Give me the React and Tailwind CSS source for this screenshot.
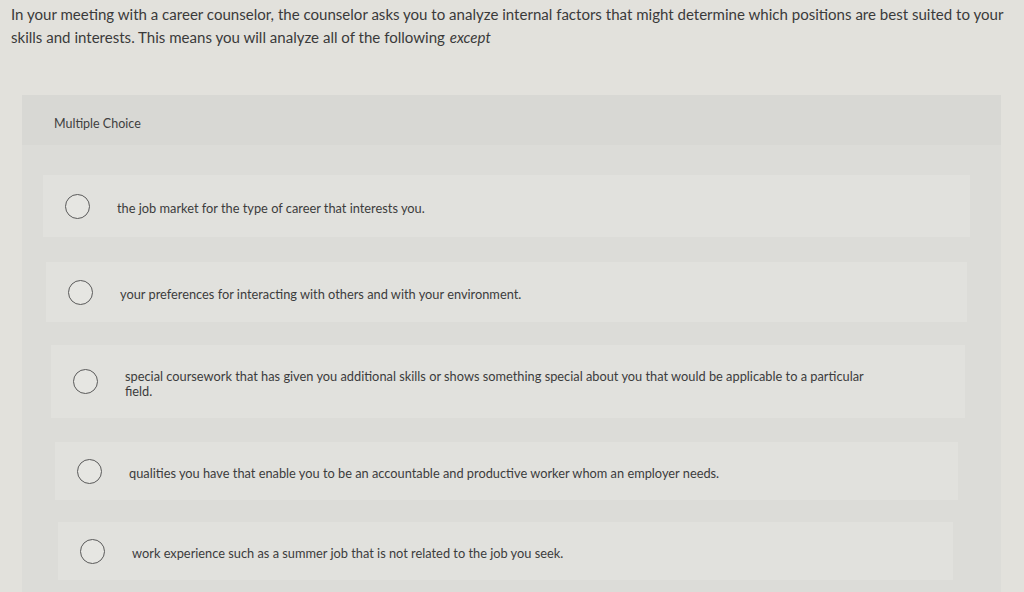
import React from 'react';

const options = [
  { id: 'a', box: 'ml-[21px] w-[927px] h-[62px] mt-[30px]', text: 'the job market for the type of career that interests you.' },
  { id: 'b', box: 'ml-[24px] w-[921px] h-[60px] mt-[25px]', text: 'your preferences for interacting with others and with your environment.' },
  { id: 'c', box: 'ml-[29px] w-[914px] h-[73px] mt-[23px]', text: 'special coursework that has given you additional skills or shows something special about you that would be applicable to a particular field.' },
  { id: 'd', box: 'ml-[33px] w-[903px] h-[58px] mt-[24px]', text: 'qualities you have that enable you to be an accountable and productive worker whom an employer needs.' },
  { id: 'e', box: 'ml-[36px] w-[895px] h-[58px] mt-[22px]', text: 'work experience such as a summer job that is not related to the job you seek.' },
];

const Radio = () => (
  <span className="shrink-0 w-[25px] h-[25px] rounded-full border border-[#5a5a5a] bg-[#e6e6e2]"></span>
);

export default function App() {
  return (
    <div
      className="w-[1024px] h-[592px] overflow-hidden bg-[#e2e1dc] text-[#3a3a3a]"
      style={{ fontFamily: 'Lato, "Open Sans", sans-serif' }}
    >
      {/* Question */}
      <div className="px-[11px] pt-[3px] text-[15.05px] leading-[23px]">
        In your meeting with a career counselor, the counselor asks you to analyze internal factors that might determine which positions are best suited to your skills and interests. This means you will analyze all of the following{' '}
        <em className="inline-block ml-[1px]">except</em>
      </div>

      {/* Question panel */}
      <div className="mt-[46px] ml-[22px] w-[979px] h-[600px] bg-[#dcdcd8]">
        <div className="h-[50px] bg-[#d8d8d4] pl-[32px] pt-[21px] text-[12.5px] leading-[16px] text-[#404040]">
          Multiple Choice
        </div>

        <div className="flex flex-col">
          {options.map((o) => (
            <div key={o.id} className={`flex items-center bg-[#e1e1dd] pl-[22px] pr-[40px] ${o.box}`}>
              <Radio />
              <p className="ml-[27px] pt-[5px] max-w-[745px] text-[12.8px] leading-[15px] text-[#3c3c3c]">{o.text}</p>
            </div>
          ))}
        </div>
      </div>
    </div>
  );
}
